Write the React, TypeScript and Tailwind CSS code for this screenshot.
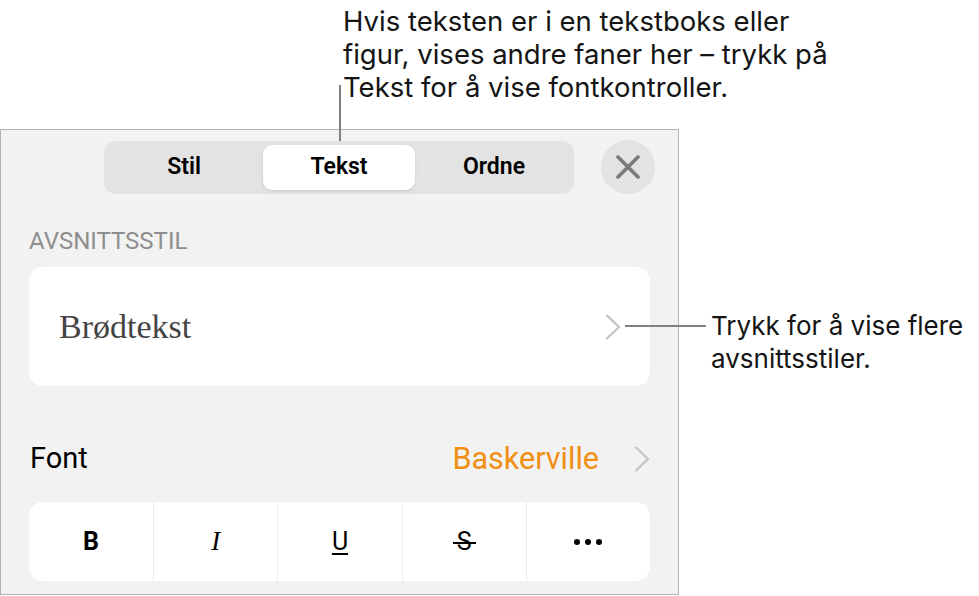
const Segment = ({ label, active }: { label: string; active?: boolean }) => (
  <div
    className={
      active
        ? "flex-1 mx-[3px] flex items-center justify-center rounded-[9px] bg-white shadow-[0_1px_3px_rgba(0,0,0,0.12)] text-[23px] font-semibold text-black"
        : "flex-1 flex items-center justify-center text-[23px] font-semibold text-black"
    }
  >
    {label}
  </div>
);

const Chevron = () => (
  <svg width="16" height="26" viewBox="0 0 16 26" fill="none">
    <path d="M2 1.5 L14 13 L2 24.5" stroke="#c5c5c5" strokeWidth="2.4" strokeLinecap="round" strokeLinejoin="round" />
  </svg>
);

const App = () => {
  return (
    <div className="relative w-[979px] h-[596px] bg-white overflow-hidden font-['Roboto',sans-serif] text-[#111]">
      {/* callout on top */}
      <div className="h-[129px] pl-[343px] pt-[5px] font-['Inter',sans-serif] text-[27.5px] leading-[33px] text-[#141414]">
        Hvis teksten er i en tekstboks eller
        <br />
        figur, vises andre faner her – trykk på
        <br />
        Tekst for å vise fontkontroller.
      </div>

      <div className="flex">
        <div className="w-[679px] h-[466px] border border-[#b4b4b4] bg-[#f2f2f2] flex flex-col">
          <div className="flex items-center gap-[27px] ml-[103px] mt-[10px]">
            <div className="w-[470px] h-[53px] rounded-[12px] bg-[#e3e3e3] p-[4px] flex">
              <Segment label="Stil" />
              <Segment label="Tekst" active />
              <Segment label="Ordne" />
            </div>
            <div className="w-[54px] h-[54px] rounded-full bg-[#e3e3e3] flex items-center justify-center">
              <svg width="24" height="24" viewBox="0 0 24 24" fill="none">
                <path d="M2 2 L22 22 M22 2 L2 22" stroke="#7a7a7a" strokeWidth="3.6" strokeLinecap="round" />
              </svg>
            </div>
          </div>

          <div className="px-[28px]">
            <div className="mt-[35px] text-[24px] leading-[24px] text-[#8e8e8e]">AVSNITTSSTIL</div>

            <div className="mt-[14px] h-[119px] rounded-[14px] bg-white flex items-center justify-between pl-[30px] pr-[29px]">
              <span className="font-['Liberation_Serif',serif] text-[34px] text-[#444]">Brødtekst</span>
              <Chevron />
            </div>

            <div className="mt-[43px] h-[60px] flex items-center justify-between">
              <span className="text-[29px] text-black pl-[1px]">Font</span>
              <div className="flex items-center gap-[35px]">
                <span className="text-[30.5px] text-[#f08f12]">Baskerville</span>
                <Chevron />
              </div>
            </div>

            <div className="mt-[13px] h-[79px] rounded-[14px] bg-white grid grid-cols-5">
              <div className="flex items-center justify-center text-[25px] font-bold text-black">B</div>
              <div className="flex items-center justify-center border-l border-[#ececec] font-['Liberation_Serif',serif] italic text-[27px] text-black">
                I
              </div>
              <div className="flex items-center justify-center border-l border-[#ececec] text-[25px] text-black underline underline-offset-[3px] decoration-[2px]">
                U
              </div>
              <div className="flex items-center justify-center border-l border-[#ececec] text-[25px] text-black">
                <span className="relative px-[4px]">
                  S
                  <span className="absolute left-0 right-0 top-[50%] h-[2px] bg-black" />
                </span>
              </div>
              <div className="flex items-center justify-center gap-[5px] border-l border-[#ececec]">
                <span className="w-[6px] h-[6px] rounded-full bg-black" />
                <span className="w-[6px] h-[6px] rounded-full bg-black" />
                <span className="w-[6px] h-[6px] rounded-full bg-black" />
              </div>
            </div>
          </div>
        </div>

        <div className="ml-[32px] mt-[180px] font-['Inter',sans-serif] text-[26px] leading-[33px] text-[#141414]">
          Trykk for å vise flere
          <br />
          avsnittsstiler.
        </div>
      </div>

      {/* leader lines */}
      <div className="absolute left-[339px] top-[85px] w-[2px] h-[56px] bg-[#808080]" />
      <div className="absolute left-[625px] top-[325px] w-[81px] h-[2px] bg-[#808080]" />
    </div>
  );
};

export default App;
